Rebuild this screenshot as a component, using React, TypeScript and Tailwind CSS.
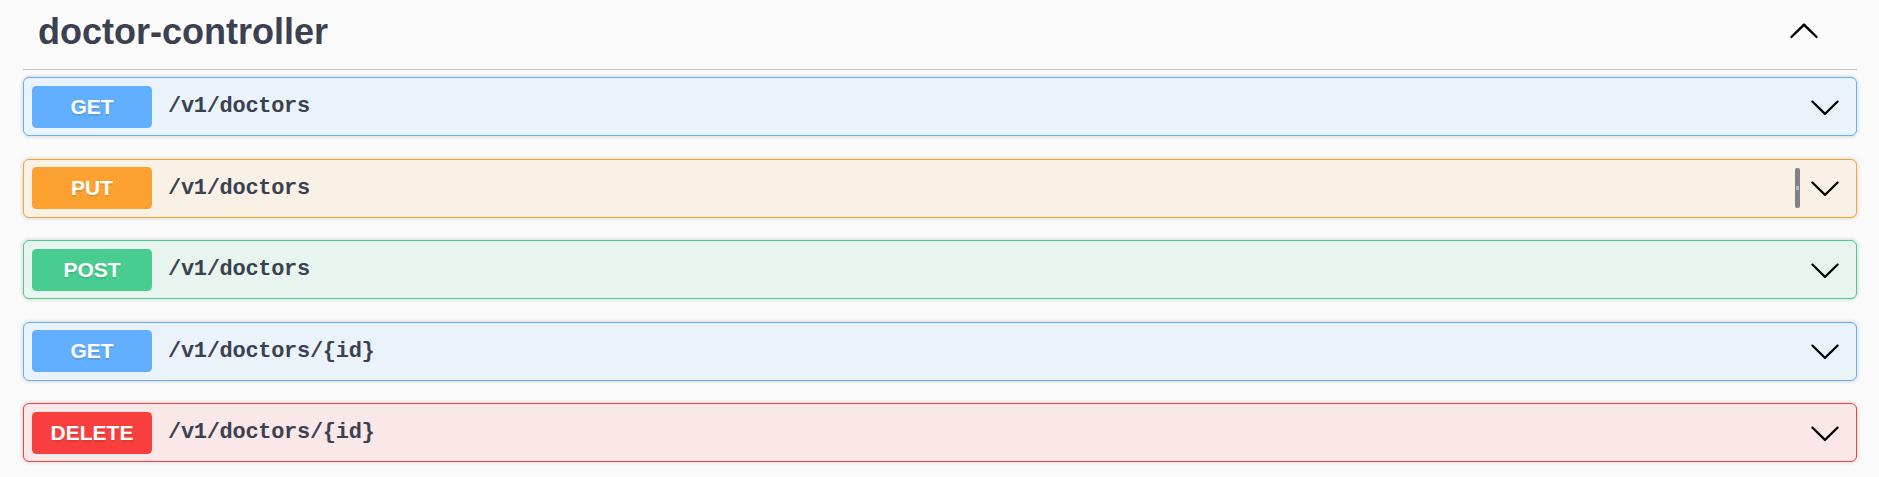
import React from "react";

type Method = "GET" | "PUT" | "POST" | "DELETE";

interface Op {
  method: Method;
  path: string;
  copyHover?: boolean;
}

const ops: Op[] = [
  { method: "GET", path: "/v1/doctors" },
  { method: "PUT", path: "/v1/doctors", copyHover: true },
  { method: "POST", path: "/v1/doctors" },
  { method: "GET", path: "/v1/doctors/{id}" },
  { method: "DELETE", path: "/v1/doctors/{id}" },
];

const styles: Record<Method, { box: string; badge: string }> = {
  GET: { box: "bg-[#ebf3fa] border-[#61affe]", badge: "bg-[#61affe]" },
  PUT: { box: "bg-[#faf1e6] border-[#fca130]", badge: "bg-[#fca130]" },
  POST: { box: "bg-[#e8f5ef] border-[#49cc90]", badge: "bg-[#49cc90]" },
  DELETE: { box: "bg-[#fae7e7] border-[#f93e3e]", badge: "bg-[#f93e3e]" },
};

const ChevronDown = () => (
  <svg width="32" height="32" viewBox="0 0 20 20" className="shrink-0">
    <path
      fill="#000"
      d="M17.418 6.109c.272-.268.709-.268.979 0s.271.701 0 .969l-7.908 7.83c-.27.268-.707.268-.979 0l-7.908-7.83c-.27-.268-.27-.701 0-.969.271-.268.709-.268.979 0L10 13.25l7.418-7.141z"
    />
  </svg>
);

const ChevronUp = () => (
  <svg width="32" height="32" viewBox="0 0 20 20" className="shrink-0">
    <path
      fill="#000"
      d="M17.418 14.908c.272.268.709.268.979 0s.271-.701 0-.969l-7.908-7.83c-.27-.268-.707-.268-.979 0l-7.908 7.83c-.27.268-.27.701 0 .969.271.268.709.268.979 0L10 7.769l7.418 7.139z"
    />
  </svg>
);

const OpBlock: React.FC<Op> = ({ method, path, copyHover }) => {
  const s = styles[method];
  return (
    <div
      className={`flex items-center h-[59px] border rounded-[6px] px-[8px] shadow-[0_0_4.5px_rgba(0,0,0,0.19)] ${s.box}`}
    >
      <span
        className={`flex items-center justify-center w-[120px] h-[42px] rounded-[4.5px] text-white font-bold text-[21px] [text-shadow:0_1.5px_0_rgba(0,0,0,0.1)] ${s.badge}`}
        style={{ fontFamily: '"Liberation Sans", Arial, sans-serif' }}
      >
        {method}
      </span>
      <span
        className="pl-[16px] text-[22px] font-semibold tracking-[-0.3px] text-[#3b4151]"
        style={{ fontFamily: '"Liberation Mono", "DejaVu Sans Mono", monospace' }}
      >
        {path}
      </span>
      <div className="ml-auto flex items-center gap-[9px] pr-[7px]">
        {copyHover && (
          <div className="w-[5px] h-[40px] rounded-[2px] bg-[#7e808b] flex items-center justify-center">
            <div className="w-[3px] h-[4px] bg-[#b9bac0]" />
          </div>
        )}
        <ChevronDown />
      </div>
    </div>
  );
};

export default function App() {
  return (
    <div
      className="w-[1879px] h-[477px] bg-[#fafafa] pl-[23px] pr-[22px] overflow-hidden"
      style={{ fontFamily: '"Liberation Sans", Arial, sans-serif' }}
    >
      <div className="flex items-start h-[70px] border-b border-[#c4c6ca] pl-[15px] pr-[37px]">
        <h3 className="pt-[11px] leading-[41px] text-[36px] font-bold text-[#3b4151]">
          doctor-controller
        </h3>
        <div className="ml-auto pt-[14px]">
          <ChevronUp />
        </div>
      </div>
      <div className="flex flex-col gap-[22.5px] pt-[7px]">
        {ops.map((op, i) => (
          <OpBlock key={i} {...op} />
        ))}
      </div>
    </div>
  );
}
